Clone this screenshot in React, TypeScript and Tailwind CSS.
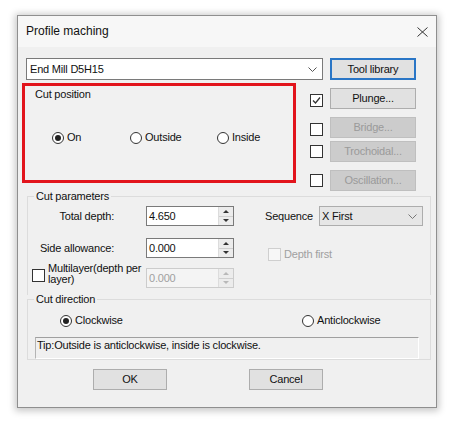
import React from "react";

function Radio({ checked }: { checked?: boolean }) {
  return (
    <span className="flex h-[12px] w-[12px] shrink-0 items-center justify-center rounded-full border border-[#333] bg-white">
      {checked && <span className="h-[6px] w-[6px] rounded-full bg-[#222]" />}
    </span>
  );
}

function Check({ checked, disabled }: { checked?: boolean; disabled?: boolean }) {
  return (
    <span
      className={`flex h-[13px] w-[13px] shrink-0 items-center justify-center border ${
        disabled ? "border-[#cfcfcf] bg-[#f7f7f7]" : "border-[#333] bg-white"
      }`}
    >
      {checked && (
        <svg width="9" height="9" viewBox="0 0 9 9">
          <path d="M1 4.5 L3.5 7 L8 1.5" fill="none" stroke="#333" strokeWidth="1.3" />
        </svg>
      )}
    </span>
  );
}

function Chevron({ color = "#555" }: { color?: string }) {
  return (
    <svg width="9" height="5" viewBox="0 0 9 5">
      <path d="M0.5 0.5 L4.5 4.5 L8.5 0.5" fill="none" stroke={color} strokeWidth="1" />
    </svg>
  );
}

function Spin({ value, disabled }: { value: string; disabled?: boolean }) {
  return (
    <div
      className={`flex h-[20px] w-[88px] shrink-0 border ${
        disabled ? "border-[#cccccc] bg-[#f4f4f4] text-[#a0a0a0]" : "border-[#7a7a7a] bg-white"
      }`}
    >
      <div className="flex flex-1 items-center pl-[2px]">{value}</div>
      <div className="flex w-[15px] flex-col border-l border-[#dcdcdc] bg-[#ececec]">
        <div className="flex flex-1 items-center justify-center border-b border-[#cfcfcf]">
          <span
            className={`h-0 w-0 border-x-[3px] border-b-[3px] border-x-transparent ${
              disabled ? "border-b-[#b8b8b8]" : "border-b-[#333]"
            }`}
          />
        </div>
        <div className="flex flex-1 items-center justify-center">
          <span
            className={`h-0 w-0 border-x-[3px] border-t-[3px] border-x-transparent ${
              disabled ? "border-t-[#b8b8b8]" : "border-t-[#333]"
            }`}
          />
        </div>
      </div>
    </div>
  );
}

function Btn({
  label,
  disabled,
  className = "",
}: {
  label: string;
  disabled?: boolean;
  className?: string;
}) {
  return (
    <div
      className={`flex shrink-0 items-center justify-center border ${
        disabled
          ? "border-[#bfbfbf] bg-[#cccccc] text-[#9a9a9a]"
          : "border-[#adadad] bg-[#e1e1e1] text-[#111]"
      } ${className}`}
    >
      {label}
    </div>
  );
}

export default function App() {
  return (
    <div className="min-h-[424px] w-[450px] bg-white pt-[15px] pl-[17px] font-['Liberation_Sans',Arial,sans-serif] text-[11px] leading-[13px] tracking-[-0.2px] text-[#111]">
      <div className="flex h-[393px] w-[420px] flex-col border border-[#8f8f8f] bg-[#f0f0f0] shadow-[0_1px_7px_2px_rgba(0,0,0,0.22)]">
        {/* title bar */}
        <div className="flex h-[31px] shrink-0 items-center justify-between bg-[#f7f7f7] pl-[8px] pr-[8px]">
          <span className="text-[12px] tracking-normal">Profile maching</span>
          <svg width="11" height="10" viewBox="0 0 11 10">
            <path d="M0.5 0.5 L10.5 9.5 M10.5 0.5 L0.5 9.5" stroke="#333" strokeWidth="1" />
          </svg>
        </div>

        <div className="flex flex-col pl-[8px]">
          {/* tool row */}
          <div className="mt-[11px] flex items-center">
            <div className="flex h-[22px] w-[297px] items-center justify-between border border-[#7a7a7a] bg-white pl-[3px] pr-[5px]">
              <span>End Mill D5H15</span>
              <Chevron />
            </div>
            <div className="ml-[7px] flex h-[22px] w-[86px] items-center justify-center border-2 border-[#2a76c6] bg-[#e1e1e1]">
              Tool library
            </div>
          </div>

          {/* cut position + options */}
          <div className="mt-[3px] flex h-[107px] items-start">
            <div className="-ml-[4px] flex h-[100px] w-[274px] flex-col border-[3px] border-[#e2141c] bg-[#f1f1f1]">
              <span className="ml-[10px] mt-[2px]">Cut position</span>
              <div className="mt-[30px] flex items-center pl-[27px]">
                <div className="flex w-[78px] items-center gap-[3px]">
                  <Radio checked />
                  <span>On</span>
                </div>
                <div className="flex w-[87px] items-center gap-[3px]">
                  <Radio />
                  <span>Outside</span>
                </div>
                <div className="flex items-center gap-[3px]">
                  <Radio />
                  <span>Inside</span>
                </div>
              </div>
            </div>

            <div className="ml-[14px] flex flex-col">
              <div className="mt-[5px] flex items-center gap-[7px]">
                <span className="mt-[3px]">
                  <Check checked />
                </span>
                <Btn label="Plunge..." className="h-[21px] w-[86px]" />
              </div>
              <div className="mt-[8px] flex items-center gap-[7px]">
                <span className="mt-[3px]">
                  <Check />
                </span>
                <Btn label="Bridge..." disabled className="h-[21px] w-[86px]" />
              </div>
              <div className="mt-[3px] flex items-center gap-[7px]">
                <Check />
                <Btn label="Trochoidal..." disabled className="h-[21px] w-[86px]" />
              </div>
              <div className="mt-[8px] flex items-center gap-[7px]">
                <Check />
                <Btn label="Oscillation..." disabled className="h-[21px] w-[86px]" />
              </div>
            </div>
          </div>

          {/* cut parameters */}
          <fieldset className="ml-[1px] w-[404px] border border-b-0 border-[#dcdcdc] pb-[7px]">
            <legend className="ml-[6px] px-[2px]">Cut parameters</legend>
            <div className="mt-[3px] flex h-[20px] items-center">
              <span className="w-[86px] text-right">Total depth:</span>
              <div className="ml-[32px]">
                <Spin value="4.650" />
              </div>
              <span className="ml-[31px]">Sequence</span>
              <div className="ml-[6px] flex h-[20px] w-[104px] items-center justify-between border border-[#adadad] bg-[#e6e6e6] pl-[2px] pr-[5px]">
                <span>X First</span>
                <Chevron color="#777" />
              </div>
            </div>
            <div className="mt-[12px] flex items-start">
              <span className="mt-[4px] w-[86px] text-right">Side allowance:</span>
              <div className="ml-[32px]">
                <Spin value="0.000" />
              </div>
              <div className="ml-[34px] mt-[10px] flex items-center gap-[3px] text-[#a0a0a0]">
                <Check disabled />
                <span>Depth first</span>
              </div>
            </div>
            <div className="mt-[2px] flex items-start">
              <div className="flex w-[118px] items-start">
                <span className="ml-[4px] mt-[6px]">
                  <Check />
                </span>
                <span className="ml-[3px] leading-[11px]">
                  Multilayer(depth per
                  <br />
                  layer)
                </span>
              </div>
              <div className="mt-[5px]">
                <Spin value="0.000" disabled />
              </div>
            </div>
          </fieldset>

          {/* cut direction */}
          <fieldset className="-mt-[2px] ml-[1px] w-[404px] border border-[#dcdcdc]">
            <legend className="ml-[6px] px-[2px]">Cut direction</legend>
            <div className="mt-[8px] flex items-center pl-[32px]">
              <div className="flex w-[242px] items-center gap-[3px]">
                <Radio checked />
                <span>Clockwise</span>
              </div>
              <div className="flex items-center gap-[3px]">
                <Radio />
                <span>Anticlockwise</span>
              </div>
            </div>
            <div className="ml-[7px] mt-[10px] h-[22px] w-[384px] border border-t-[#a0a0a0] border-l-[#b4b4b4] border-r-white border-b-white pl-[1px] pt-[1px]">
              Tip:Outside is anticlockwise, inside is clockwise.
            </div>
          </fieldset>

          {/* buttons */}
          <div className="mt-[9px] flex">
            <Btn label="OK" className="ml-[67px] h-[21px] w-[74px]" />
            <Btn label="Cancel" className="ml-[82px] h-[21px] w-[74px]" />
          </div>
        </div>
      </div>
    </div>
  );
}
